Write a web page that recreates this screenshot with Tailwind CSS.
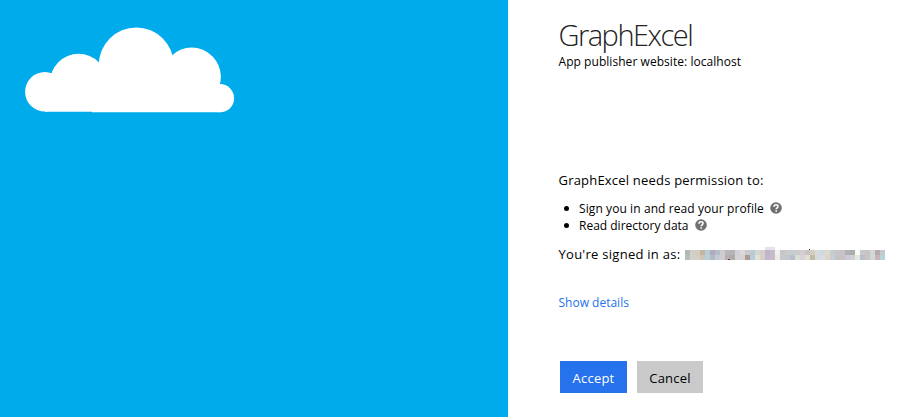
<!DOCTYPE html>
<html lang="en">
<head>
<meta charset="utf-8">
<title>GraphExcel</title>
<script src="https://cdn.jsdelivr.net/npm/@tailwindcss/browser@4"></script>
</head>
<body class="flex h-[417px] w-[924px] overflow-hidden bg-white font-['Open_Sans','Noto_Sans',sans-serif] text-[13px] text-black">
<aside class="h-full w-[508px] shrink-0 bg-[#00abec]">
  <svg class="block" width="508" height="130" viewBox="0 0 508 130" fill="#fff">
    <circle cx="44.9" cy="91.8" r="19.8"/>
    <circle cx="78.6" cy="82.4" r="28.6"/>
    <circle cx="136.3" cy="64.9" r="37.5"/>
    <circle cx="191.7" cy="76.8" r="29.2"/>
    <circle cx="220" cy="98.2" r="14.1"/>
    <path d="M45 75H220V112.3H92V111.7H45Z"/>
  </svg>
</aside>
<main class="flex flex-col items-start pt-[18px] pl-[50.5px] whitespace-nowrap">
  <h1 class="h-[34px] text-[29px] leading-[34px] font-light tracking-[-1.5px] text-[#222]">GraphExcel</h1>
  <p class="mt-px h-[18px] text-[12px] leading-[18px] tracking-[0.05px]">App publisher website: localhost</p>
  <p class="mt-[100px] h-[18px] text-[13px] leading-[18px] tracking-[0.2px]">GraphExcel needs permission to:</p>
  <ul class="mt-[11px] ml-[5.5px] text-[12px] leading-[17px]">
    <li class="flex h-[17px] items-center"><span class="mr-[10px] size-[5px] rounded-full bg-black"></span><span class="tracking-[0.09px]">Sign you in and read your profile</span>
      <svg class="ml-[6px] -mt-[2px]" width="12" height="12" viewBox="0 0 12 12"><circle cx="6" cy="6" r="5.8" fill="#707070"/><path d="M4 4.7C4.1 2 8.1 2.2 8 4.5C7.9 5.8 6.2 5.8 6.2 7.3M6.2 8.3V9.8" fill="none" stroke="#fff" stroke-width="1.6"/></svg></li>
    <li class="flex h-[17px] items-center"><span class="mr-[10px] size-[5px] rounded-full bg-black"></span><span>Read directory data</span>
      <svg class="ml-[6px] -mt-[2px]" width="12" height="12" viewBox="0 0 12 12"><circle cx="6" cy="6" r="5.8" fill="#707070"/><path d="M4 4.7C4.1 2 8.1 2.2 8 4.5C7.9 5.8 6.2 5.8 6.2 7.3M6.2 8.3V9.8" fill="none" stroke="#fff" stroke-width="1.6"/></svg></li>
  </ul>
  <div class="mt-[11px] flex h-[18px] leading-[18px]"><span class="w-[126.5px] tracking-[0.27px]">You're signed in as:</span>
    <svg id="redacted" width="202" height="18" viewBox="0 0 202 18" shape-rendering="crispEdges"></svg>
  </div>
  <a class="mt-[31px] h-[18px] text-[12px] leading-[18px] text-[#2672ec]">Show details</a>
  <div class="mt-[49px] ml-[1.5px] flex gap-[10px] text-[13px]">
    <button class="h-[32px] w-[67px] bg-[#2672ec] pt-[3px] font-medium tracking-[0.2px] text-white">Accept</button>
    <button class="h-[32px] w-[66px] bg-[#cacaca] pt-[3px] tracking-[0.2px]">Cancel</button>
  </div>
</main>
<script>
const rows = [
 "b0b9b5 d3cec6 d4cdbb c5b6a4 b4cdd6 b3a9bd b2bdc9 cfcbd0 bcb7bc b7b2ba d2cfd5 d9d8dc c9c9ce b9cbd4 d5d6d8 d7cfc5 bfb4cb c4bdc9 f3f1ef c7c7c9 cacaca c5cdd2 cbcbce d5cbd2 c8c4c5 d5cebf d5dce1 cddae0 dfd9ce c3cdd3 c5c6c7 cfd8d9 d8dcde c6c3ca b1b1b1 aaafab fafbf5 c5c8cc ccc4c4 d0d8d2 b8a9b0 c6c9cc".split(" "),
 "b4c0b9 d3d1cc d6cfbf cfc4b5 b6d0db b4b9c5 c2ccd4 d0cdd2 b9aeb5 a9ada9 d4d3d6 d4d2d4 ad9b8f b4cdd8 e1e2cf d5d0c8 c3b7cd c4bdc8 f0ebe6 c4c9cb c2c8cb babfc7 d8dfd5 dccfd8 dfe1d2 c1bca4 d7dadb d6e0e3 ded5c7 c5cfd4 c3c3c5 c6d3d4 b3b9c2 c8c1c0 cbc8db cfcfd5 e5e8dd b8bfc9 c9c4c5 cfdad4 c5b4b8 b9d3db".split(" ")
];
const svg = document.getElementById("redacted");
const cell = (x, y, c, h = 5, width = 5) => {
  const r = document.createElementNS("http://www.w3.org/2000/svg", "rect");
  for (const [k, v] of Object.entries({x, y, width, height: h, fill: "#" + c})) r.setAttribute(k, v);
  svg.append(r);
};
// Each row covers 200px of the line
rows.forEach((row, j) => {
  row.splice(31, 2);
  row.forEach((c, i) => cell(i * 5, 5 + j * 5, c));
});
cell(80, 2, "e5dfeb", 3);
cell(85, 2, "e4e4e4", 3);
cell(43, 14, "604028", 1, 2);
cell(124, 4, "333333", 1, 1);
</script>
</body>
</html>
